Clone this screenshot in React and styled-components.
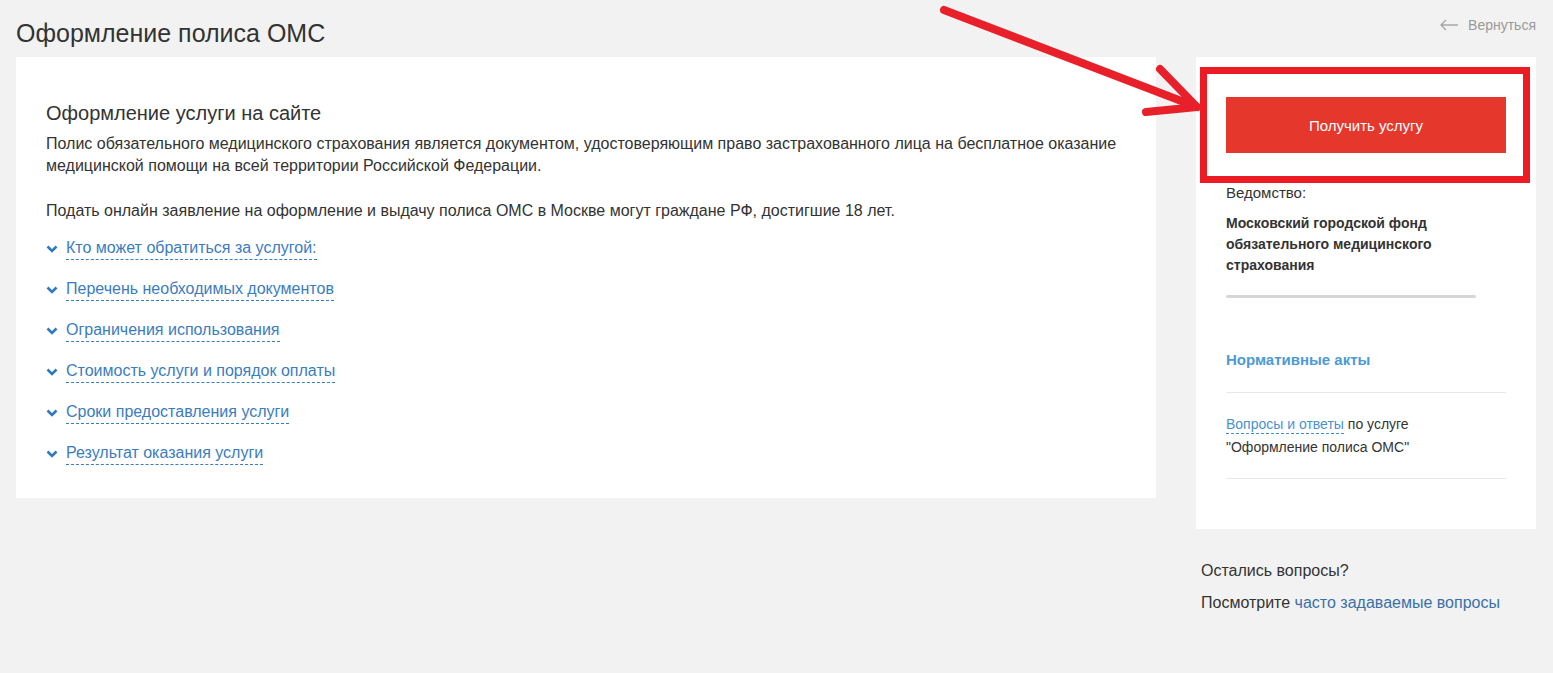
import React from 'react'
import styled, { createGlobalStyle } from 'styled-components'

const Global = createGlobalStyle`
  html, body {
    margin: 0;
    padding: 0;
    background: #f2f2f2;
    font-family: Arial, "Liberation Sans", sans-serif;
    color: #333;
  }
`;

const Page = styled.div`
  position: relative;
  width: 1553px;
  height: 673px;
  overflow: hidden;
  padding: 0 17px 0 16px;
  box-sizing: border-box;
`;

const Header = styled.div`
  display: flex;
  justify-content: space-between;
  align-items: flex-start;
  height: 57px;
`;

const PageTitle = styled.h1`
  margin: 19px 0 0;
  font-size: 25px;
  line-height: 29px;
  font-weight: 400;
  color: #333;
`;

const BackLink = styled.a`
  display: flex;
  align-items: center;
  gap: 9px;
  margin-top: 16px;
  font-size: 14px;
  line-height: 18px;
  color: #9a9a9a;
  text-decoration: none;
`;

const Columns = styled.div`
  display: flex;
  align-items: flex-start;
  gap: 40px;
`;

const Main = styled.div`
  width: 1140px;
  background: #fff;
  padding: 44px 30px 33px;
  box-sizing: border-box;
`;

const CardTitle = styled.h2`
  margin: 0 0 8px;
  font-size: 20px;
  line-height: 24px;
  font-weight: 400;
  color: #333;
`;

const Para = styled.p`
  margin: 0 0 ${({ $gap }) => $gap || 0}px;
  font-size: 16px;
  line-height: 22px;
  color: #333;
`;

const Accordion = styled.div`
  display: flex;
  flex-direction: column;
  gap: 19px;
  margin-top: 16px;
`;

const AccItem = styled.div`
  display: flex;
  align-items: center;
  gap: 8px;
  height: 22px;
`;

const DashedLink = styled.span`
  font-size: ${({ $size }) => $size || 16}px;
  line-height: 20px;
  padding-bottom: 1px;
  color: ${({ $color }) => $color || '#3b7cbf'};
  border-bottom: 1px dashed ${({ $color }) => $color || '#3b7cbf'};
  cursor: pointer;
`;

const Side = styled.div`
  width: 340px;
  display: flex;
  flex-direction: column;
`;

const Panel = styled.div`
  background: #fff;
  padding: 40px 30px 50px;
  box-sizing: border-box;
`;

const ButtonWrap = styled.div`
  position: relative;
`;

const Highlight = styled.div`
  position: absolute;
  top: -30px;
  bottom: -30px;
  left: -26px;
  right: -24px;
  border: 7px solid #ed1c24;
  pointer-events: none;
`;

const RedButton = styled.button`
  width: 100%;
  height: 56px;
  border: none;
  background: #e5372c;
  color: #fff;
  font-family: inherit;
  font-size: 15px;
  cursor: pointer;
`;

const Label = styled.div`
  margin-top: 30px;
  font-size: 15px;
  line-height: 20px;
  color: #333;
`;

const OrgName = styled.div`
  margin-top: 10px;
  font-size: 14px;
  line-height: 21px;
  font-weight: 700;
  color: #333;
`;

const Bar = styled.div`
  width: 250px;
  height: 3px;
  margin-top: 19px;
  border-radius: 2px;
  background: #d6d6d6;
`;

const SectionLink = styled.div`
  margin-top: 52px;
  padding-bottom: 22px;
  font-size: 15px;
  line-height: 20px;
  font-weight: 700;
  color: #4b9bd6;
  border-bottom: 1px solid #e8e8e8;
`;

const QA = styled.div`
  padding: 20px 0 19px;
  font-size: 14px;
  line-height: 23px;
  color: #333;
  border-bottom: 1px solid #e8e8e8;
`;

const Help = styled.div`
  padding: 26px 0 0 5px;
  font-size: 16px;
  line-height: 32px;
  color: #333;
`;

const HelpLink = styled.a`
  color: #3a70a9;
  text-decoration: none;
`;

const Arrow = styled.svg`
  position: absolute;
  left: 0;
  top: 0;
  pointer-events: none;
`;

const Chevron = () => (
  <svg width="12" height="8" viewBox="0 0 12 8">
    <polyline points="1.5,1.5 6,6 10.5,1.5" fill="none" stroke="#2f79bf" strokeWidth="2.6" />
  </svg>
);

const items = [
  'Кто может обратиться за услугой:',
  'Перечень необходимых документов',
  'Ограничения использования',
  'Стоимость услуги и порядок оплаты',
  'Сроки предоставления услуги',
  'Результат оказания услуги',
];

export default function App() {
  return (
    <Page>
      <Global />
      <Header>
        <PageTitle>Оформление полиса ОМС</PageTitle>
        <BackLink href="#">
          <svg width="20" height="12" viewBox="0 0 20 12">
            <path d="M19 6H2M7 1L2 6l5 5" fill="none" stroke="#a8a8a8" strokeWidth="1.4" />
          </svg>
          Вернуться
        </BackLink>
      </Header>
      <Columns>
        <Main>
          <CardTitle>Оформление услуги на сайте</CardTitle>
          <Para $gap={23}>
            Полис обязательного медицинского страхования является документом, удостоверяющим право застрахованного лица на бесплатное оказание медицинской помощи на всей территории Российской Федерации.
          </Para>
          <Para>
            Подать онлайн заявление на оформление и выдачу полиса ОМС в Москве могут граждане РФ, достигшие 18 лет.
          </Para>
          <Accordion>
            {items.map((t) => (
              <AccItem key={t}>
                <Chevron />
                <DashedLink>{t}</DashedLink>
              </AccItem>
            ))}
          </Accordion>
        </Main>
        <Side>
          <Panel>
            <ButtonWrap>
              <RedButton>Получить услугу</RedButton>
              <Highlight />
            </ButtonWrap>
            <Label>Ведомство:</Label>
            <OrgName>
              Московский городской фонд<br />
              обязательного медицинского<br />
              страхования
            </OrgName>
            <Bar />
            <SectionLink>Нормативные акты</SectionLink>
            <QA>
              <DashedLink $size={14} $color="#4a92cc">Вопросы и ответы</DashedLink> по услуге<br />
              "Оформление полиса ОМС"
            </QA>
          </Panel>
          <Help>
            Остались вопросы?<br />
            Посмотрите <HelpLink href="#">часто задаваемые вопросы</HelpLink>
          </Help>
        </Side>
      </Columns>
      <Arrow width="1553" height="673" viewBox="0 0 1553 673">
        <g fill="none" stroke="#e8202a" strokeWidth="8" strokeLinecap="round" strokeLinejoin="round">
          <path d="M944 10 L1197 107" />
          <path d="M1160 69 L1197 107 L1146 112" />
        </g>
      </Arrow>
    </Page>
  );
}
